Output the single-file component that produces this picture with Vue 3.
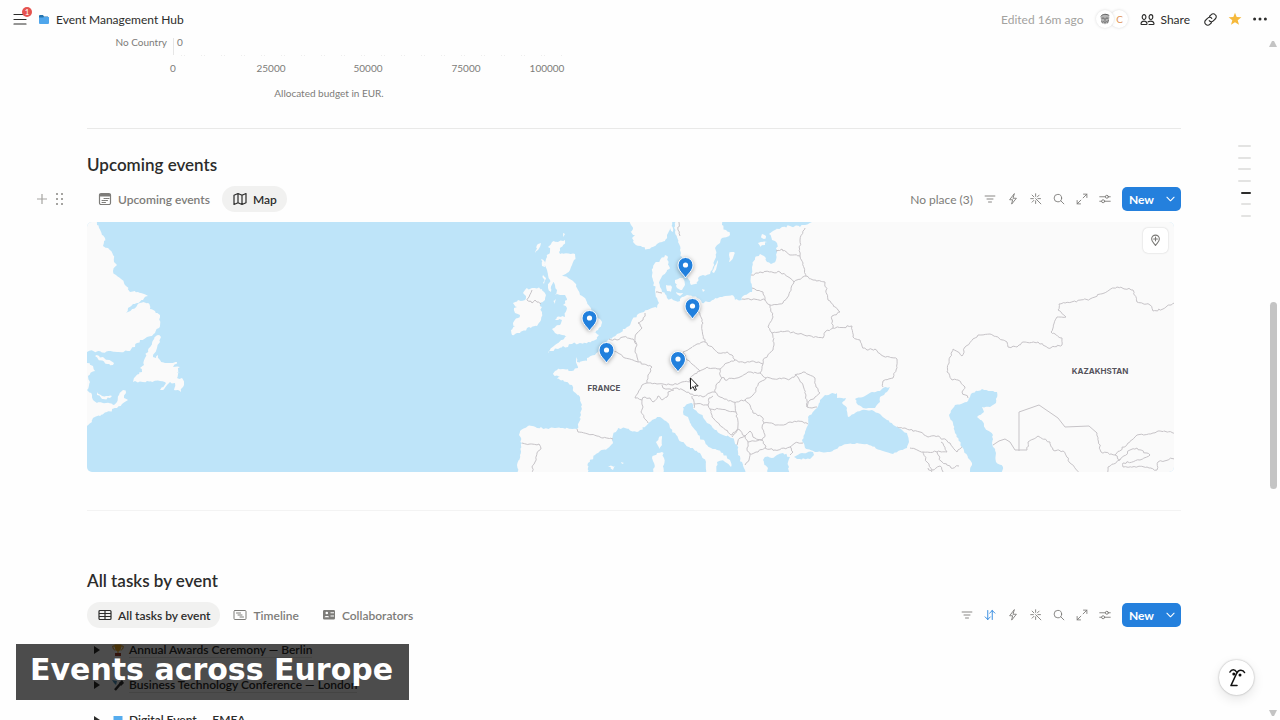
<script setup>
import { ref } from 'vue'

const ticks = [
  { x: 86, label: '0' },
  { x: 184, label: '25000' },
  { x: 281, label: '50000' },
  { x: 379, label: '75000' },
  { x: 460, label: '100000' },
]

const icons = {
  filter: 'M1.500 4h13M4 8h8M6 12h4',
  sort: 'M5 2v12M1.500 10.500 5 14l3.500-3.500M11 14V2M7.500 5.500 11 2l3.500 3.500',
  bolt: 'M9.500 1.200 3.500 9h4L6.200 14.800 12.500 7H8.500z',
  spark: 'M7.500 7.500l7 7M7.500 1v3.500M1 7.500h3.500M2.800 2.800l2.400 2.400M12.200 2.800 9.800 5.200M2.800 12.200l2.400-2.400M7.500 10.500V14M10.500 7.500H14',
  search: 'M11.500 6.800a5 5 0 1 1-10 0 5 5 0 0 1 10 0zM10.500 10.500l4 4',
  expand: 'M9.500 6.500 14.500 1.500M10 1.500h4.500V6M6.500 9.500l-5 5M1.500 10v4.500H6',
  sliders: 'M1 5h7.500M12.500 5H15M1 11h2.500M7.500 11H15M12.500 5a2 2 0 1 1-4 0 2 2 0 0 1 4 0zM7.500 11a2 2 0 1 1-4 0 2 2 0 0 1 4 0z',
}
const eventTools = ['filter', 'bolt', 'spark', 'search', 'expand', 'sliders']
const taskTools = ['filter', 'sort', 'bolt', 'spark', 'search', 'expand', 'sliders']

const outline = [0, 0, 0, 0, 2, 1, 1]
const tasks = ref([
  { icon: 'trophy', title: 'Annual Awards Ceremony — Berlin' },
  { icon: 'mic', title: 'Business Technology Conference — London' },
  { icon: 'screen', title: 'Digital Event — EMEA' },
])

const pins = [
  [685.5, 267],
  [692.5, 308],
  [589.5, 320],
  [606.5, 352],
  [678, 361],
]

// Splits each segment into short steps and nudges them, so coasts and borders look natural.
const noise = (a, b) => {
  const n = Math.sin(a * 12.9898 + b * 78.233) * 43758.5453
  return n - Math.floor(n) - 0.5
}
const roughen = (points, amount) => {
  const list = points.split(' ').map((p) => p.split(',').map(Number))
  const out = [list[0]]
  for (let i = 1; i < list.length; i++) {
    const [x0, y0] = list[i - 1]
    const [x1, y1] = list[i]
    const steps = Math.max(1, Math.round(Math.hypot(x1 - x0, y1 - y0) / 2.2))
    for (let s = 1; s < steps; s++) {
      const x = x0 + ((x1 - x0) * s) / steps
      const y = y0 + ((y1 - y0) * s) / steps
      out.push([(x + noise(x, y) * amount).toFixed(1), (y + noise(y, x) * amount).toFixed(1)])
    }
    out.push([x1, y1])
  }
  return 'M' + out.join('L')
}
const close = (points) => points + ' ' + points.split(' ')[0]

const land = [
  '80,210 94,210 97,225 99,228 102,235 105,238 103,246 108,248 113,255 114,262 117,265 113,271 116,275 120,278 125,285 130,292 138,292 148,296 143,300 135,304 128,308 126,313 133,309 140,303 148,303 150,309 155,311 160,315 159,328 155,333 147,337 140,340 135,347 130,351 117,352 80,351',
  '158,335 161,337 160,342 157,348 153,357 156,358 158,355 160,360 165,363 170,363 177,362 173,367 180,367 177,373 180,372 177,378 182,378 184,385 181,392 178,390 174,390 175,383 170,382 163,390 160,390 166,383 160,381 147,381 133,382 135,377 142,372 140,368 144,365 145,358 148,350 152,343',
  '95,356 103,357 114,363 113,365 107,364 98,359',
  '80,363 87,363 93,366 95,371 88,376 90,382 87,390 92,395 93,400 97,403 103,403 113,405 117,402 119,395 123,390 126,393 124,398 128,400 122,404 117,408 107,412 100,416 93,418 92,422 87,426 80,428',
  '96,391 102,396 112,396 110,398 103,399 97,395',
  '565,240 563,245 559,252 560,254 575,254 574,260 571,267 567,273 562,276 568,278 573,281 577,288 580,295 586,300 590,307 593,313 592,319 600,319 602,323 598,330 593,333 599,335 597,339 588,342 580,343 572,344 568,347 563,346 558,349 552,351 548,353 550,350 555,345 562,340 565,337 570,335 562,335 555,333 552,329 560,325 562,320 555,320 557,317 565,317 567,308 563,305 567,300 565,295 560,295 555,295 557,290 555,285 553,282 551,292 548,288 550,280 548,275 547,270 545,263 547,257 550,252 548,247 552,242 558,242',
  '525,290 532,288 542,289 546,295 545,300 540,304 542,312 541,320 537,326 527,328 520,333 512,335 511,330 515,326 513,323 518,318 520,315 515,313 514,308 517,307 513,303 518,300 525,300 526,296 523,293',
  '537,245 541,243 538,250 535,253', '541,259 545,262 545,267 542,266', '543,275 546,278 544,284', '553,301 556,299 555,304', '563,233 565,234 563,237',
  '628,210 671,210 673,232 670,228 667,235 665,241 657,244 648,249 642,247 633,242 632,238 635,235 630,232 633,229 631,225',
  '676,210 675,232 678,242 680,250 682,257 687,267 687,277 690,283 691,285 697,284 698,278 703,275 710,274 713,267 716,257 715,248 720,243 722,238 730,235 726,230 722,225 720,210',
  '732,252 734,252 733,258 729,262 729,255', '717,260 718,262 714,273 712,272',
  '666,285 672,287 671,292 667,291', '675,280 683,278 685,285 682,290 677,288', '676,292 683,293 680,296', '702,289 705,290 703,292',
  '758,243 767,242 765,245 760,247', '762,234 766,236 764,239 761,237',
  '662,436 662,445 659,449 656,442', '662,452 664,458 662,480 653,480 654,463 652,458 657,453', '608,467 615,466 613,470', '621,462 624,463 622,464',
  '815,205 812,222 805,225 800,227 790,226 782,227 773,231 769,234 772,240 777,243 777,250 776,260 771,264 767,262 764,256 760,254 755,258 752,267 751,275 752,287 752,292 743,296 742,300 735,300 732,295 720,297 710,302 702,303 697,298 687,295 682,297 680,301 673,300 667,298 665,294 662,292 660,287 660,280 663,275 667,270 670,268 668,265 668,257 665,255 660,260 655,263 653,268 652,277 654,283 655,290 657,298 659,303 657,308 652,308 644,312 637,315 632,320 627,327 620,333 613,337 608,340 603,345 600,350 595,355 587,358 587,361 577,362 576,357 578,368 572,371 563,369 555,371 553,374 560,377 557,379 563,380 572,385 574,392 580,397 582,405 581,415 578,425 577,429 563,428 550,428 537,428 528,426 520,431 519,435 522,443 520,455 517,465 518,480 587,480 588,463 595,455 600,451 608,448 613,442 613,435 618,428 625,428 637,432 647,425 652,420 660,417 667,422 670,428 675,433 682,442 690,448 700,453 706,462 708,480 716,480 717,462 724,461 731,467 730,460 723,453 707,445 698,435 690,423 688,417 683,412 683,407 692,403 695,410 698,413 703,417 707,423 715,430 723,435 732,438 737,445 738,455 742,462 745,470 748,480 768,480 768,468 763,460 765,457 772,458 777,455 783,453 790,457 788,462 790,480 1190,480 1190,205',
].map((points) => roughen(close(points), 2.4) + 'z').join('')

const seas = [
  '794,457 802,453 813,452 814,455 810,459 797,459',
  '825,395 837,393 837,398 846,398 842,403 847,408 848,417 855,413 862,410 872,410 878,413 887,420 897,427 907,433 909,442 907,448 893,454 880,450 867,444 857,443 843,445 830,452 817,452 805,448 802,440 808,425 808,417 817,408 820,400',
  '890,387 883,388 880,391 872,392 863,397 855,399 858,405 863,408 875,408 880,402 880,397 887,392',
  '970,397 972,393 982,389 997,392 996,403 990,407 982,407 984,412 977,417 983,422 985,428 993,435 992,443 996,453 996,462 1003,467 1000,480 967,480 972,463 968,458 962,447 955,433 953,423 949,415 955,405 967,402',
].map((points) => roughen(close(points), 1.4) + 'z').join('')

const borders = [
  '532,290 529,297 527,300 532,303 535,300 541,304', '680,215 678,230 680,236', '656,292 662,293',
  '645,313 643,320 638,323 642,328 637,333 635,338 637,345 635,352 637,357 638,362', '609,339 617,340 623,337 633,339 636,344', '606,343 613,350 618,353 625,358 633,360 638,362 652,367 648,375 647,383',
  '647,383 642,385 638,393 635,398 642,400 645,397 650,398 653,402 658,396 662,400 667,397 668,392 674,390', '647,383 657,384 663,384 673,385 682,382 690,382 690,378 700,371', '662,385 663,388 670,389 677,388 683,390 690,394 703,397 710,393 715,392',
  '700,371 692,364 687,360 683,352 688,350 697,344 705,342 713,348 718,353 727,352 732,355 735,360 745,363 752,361 763,364 760,373 766,378',
  '642,400 643,407 641,412 644,418 648,423', '577,429 578,432 588,434 597,436 603,438 613,439', '522,443 530,444 539,444 541,449 537,453 535,462 532,467 534,478',
  '697,303 700,315 703,323 702,330 705,342', '700,371 707,367 720,369 727,363 735,360', '720,369 720,375 725,380 740,377 748,372 760,373', '774,345 773,350 763,360 763,364',
  '722,378 716,385 715,392 720,397 733,402 745,400 753,395 760,382 766,378', '692,396 694,404 708,405 709,398 713,396', '694,404 694,408', '708,405 710,409',
  '766,378 790,379 797,374 803,372 815,378 816,387 820,393 815,397 810,400 807,407', '795,374 803,385 806,395 807,407 812,408 817,407',
  '745,400 750,405 753,413 762,417 764,423 762,428 765,435 762,440 755,438 750,431 745,436', '764,423 782,425 790,422 798,421 808,424', '765,448 775,450 790,447 795,443 803,443', '790,447 793,452 790,455',
  '748,442 762,440 766,447 758,452 750,454 747,448 748,442', '750,454 749,460 745,465', '737,445 740,438 745,436 748,442', '710,409 720,409 736,412 738,425 737,430 732,435 722,427 712,417 710,409', '735,402 736,412', '732,437 738,429 745,436',
  '776,251 782,249 790,255 800,256', '805,228 800,240 800,256 803,263 806,276 813,280 825,282 828,300 840,312 832,316 833,328 852,326 853,337 860,340 862,346 867,350 875,349 883,356 897,359 896,370 893,378 883,381 883,387',
  '751,275 760,272 780,272 790,278 794,282 806,276', '794,282 787,298 783,303 770,305', '752,288 763,292 765,300 770,305 773,317 768,327 772,333 774,345', '742,299 765,300', '772,333 787,331 807,336 823,338 825,332 833,328',
  '897,427 905,428 920,432 928,437 938,436 950,443 957,452 963,445', '910,448 923,452 937,452 947,452 941,442', '923,452 927,462 932,470 940,466 945,474', '937,452 941,461 951,468 959,466', '928,468 934,474',
  '968,398 962,392 965,387 958,380 952,380 947,372 950,357 953,349 962,356 965,347 978,335 990,334 1007,342 1008,347 1017,347 1023,342 1038,342 1048,348 1062,345 1062,338 1051,332 1057,317 1066,317 1058,310 1059,304 1090,299 1117,287 1133,290 1137,302 1150,305 1153,311 1163,309 1180,299',
  '1097,433 1101,452 1115,455 1137,435 1153,433 1158,431 1180,433', '1027,450 1028,442 1038,436 1050,442 1053,450 1063,451 1070,463 1082,476', '1115,455 1120,460 1108,467 1107,476', '1120,460 1130,450 1137,448 1150,455 1140,460 1123,463 1123,467 1147,467 1157,470 1158,462 1180,457',
].map((points) => roughen(points, 1.8)).join('')

const straightBorders = 'M993 445L999 441L1005 439L1010 442L1015 450L1027 450M1019 451V412L1039 405L1058 418L1065 427L1089 426L1097 433'
</script>

<template>
  <div class="app">
    <header class="topbar">
      <button class="icon-btn menu" aria-label="Open menu">
        <svg viewBox="0 0 14 12" width="14" height="12"><path d="M1 1.500h12M1 6.500h12M1 11h12" /></svg>
        <span class="badge">1</span>
      </button>
      <svg class="folder" viewBox="0 0 10 9" width="10" height="9"><path fill="#2574ae" d="M0 1a1 1 0 0 1 1-1h3l1 1.500h4v3H0z" /><path fill="#4fa6ec" d="M0 2.500h4L5 2h5v6a1 1 0 0 1-1 1H1a1 1 0 0 1-1-1z" /></svg>
      <a class="crumb" href="#">Event Management Hub</a>
      <span class="edited">Edited 16m ago</span>
      <span class="people">
        <span class="avatar face">
          <svg viewBox="0 0 14 14" width="12" height="12"><path fill="#b5b5b5" d="M2 5c0-5 10-6 10 0 0 4-2 8-5 8S2 9 2 5z" /><path d="M2 4c2-3 7-3 10-1M3 6h3M8 6h3M7 6v3M5 10c1 1 3 1 4 0M3 9l1 3M11 8l-1 4" stroke="#555" fill="none" /></svg>
        </span>
        <span class="avatar letter">C</span>
      </span>
      <button class="share">
        <svg viewBox="0 0 16 14" width="15" height="13"><path d="M6.300 4.300c0 1.500-.9 2.700-2 2.700s-2-1.200-2-2.700S3.200 1.800 4.300 1.800s2 1 2 2.500zM13.700 4.300c0 1.500-.9 2.700-2 2.700s-2-1.200-2-2.700.9-2.500 2-2.500 2 1 2 2.500zM1 11.500C1.300 9.600 2.500 8.700 4.300 8.700s2.900.9 3.200 2.800c0 .6-.3.900-.8.900H1.800c-.5 0-.8-.3-.8-.9zM8.700 9.500c.7-.5 1.600-.8 2.900-.8 1.900 0 3.100.9 3.400 2.800 0 .6-.3.900-.8.900H9.600" /></svg>
        Share
      </button>
      <button class="icon-btn link" aria-label="Copy link">
        <svg viewBox="0 0 14 14" width="13" height="13"><path d="M6 3.500l1.800-1.800a2.900 2.900 0 0 1 4.200 0l.300.300a2.900 2.900 0 0 1 0 4.200L10 8.500a2.900 2.900 0 0 1-4.400-.2M8 10.500l-1.800 1.800a2.900 2.900 0 0 1-4.200 0L1.700 12a2.900 2.900 0 0 1 0-4.200L4 5.500a2.900 2.900 0 0 1 4.400.2" /></svg>
      </button>
      <button class="icon-btn star" aria-label="Favorite">
        <svg viewBox="0 0 14 14" width="14" height="14"><path d="M7 .7l1.700 4.400 4.700.2-3.700 2.900 1.300 4.600L7 10.200l-4 2.600 1.300-4.600L.6 5.300l4.700-.2z" /></svg>
      </button>
      <button class="icon-btn more" aria-label="More">
        <svg viewBox="0 0 14 4" width="14" height="4"><circle cx="1.600" cy="2" r="1.500" /><circle cx="7" cy="2" r="1.500" /><circle cx="12.400" cy="2" r="1.500" /></svg>
      </button>
    </header>

    <main class="page">
      <svg class="chart" viewBox="0 0 500 70" width="500" height="70" role="img" aria-label="Allocated budget in EUR.">
        <path d="M86.500 0v17" stroke="#e6e6e6" />
        <path d="M94 17.500h382" stroke="#ededed" stroke-dasharray="1 2 1 16" />
        <text x="80" y="8" text-anchor="end">No Country</text>
        <text x="90" y="8">0</text>
        <text v-for="t in ticks" :key="t.label" :x="t.x" y="34" text-anchor="middle">{{ t.label }}</text>
        <text x="242" y="59" text-anchor="middle">Allocated budget in EUR.</text>
      </svg>

      <section class="events">
        <h2>Upcoming events</h2>
        <div class="bar">
          <div class="handles">
            <button class="icon-btn" aria-label="Add block"><svg viewBox="0 0 10 10" width="10" height="10"><path d="M5 0v10M0 5h10" /></svg></button>
            <button class="icon-btn" aria-label="Drag block"><svg class="grip" viewBox="0 0 8 12" width="8" height="12"><path d="M1 0h2v2H1zM6 0h2v2H6zM1 5h2v2H1zM6 5h2v2H6zM1 10h2v2H1zM6 10h2v2H6z" /></svg></button>
          </div>
          <button class="tab">
            <svg viewBox="0 0 14 14" width="14" height="14"><path d="M3 1.500h8A1.500 1.500 0 0 1 12.500 3v8a1.500 1.500 0 0 1-1.500 1.500H3A1.500 1.500 0 0 1 1.500 11V3A1.500 1.500 0 0 1 3 1.500z" /><path d="M2.500 3.200h9" stroke-width="2.400" /><path d="M6 6.500h5M4 8.500h6M4 10.500h4" stroke-width="1" stroke-dasharray="1.500 .5" /></svg>
            Upcoming events
          </button>
          <button class="tab active">
            <svg viewBox="0 0 14 14" width="14" height="14"><path d="M1 3.200 5 1.500l4 1.700 4-1.700v9.300l-4 1.700-4-1.700-4 1.700zM5 1.500v9.300M9 3.200v9.300" /></svg>
            Map
          </button>
          <div class="tools">
            <button class="no-place">No place (3)</button>
            <button v-for="name in eventTools" :key="name" class="icon-btn tool" :aria-label="name"><svg viewBox="0 0 16 16" width="12" height="12"><path :d="icons[name]" /></svg></button>
            <span class="new-group">
              <button class="new">New</button><button class="caret" aria-label="New options"><svg viewBox="0 0 10 6" width="9" height="6"><path d="M1 1l4 4 4-4" /></svg></button>
            </span>
          </div>
        </div>

        <div class="map">
          <svg class="world" viewBox="87 222 1087 250" preserveAspectRatio="xMidYMid slice">
            <path class="land" :d="land" />
            <path class="border" :d="borders" />
            <path class="sea" :d="seas" />
            <path class="border" :d="straightBorders" />
            <text x="604" y="391" text-anchor="middle">FRANCE</text>
            <text x="1100" y="374" text-anchor="middle">KAZAKHSTAN</text>
            <g v-for="pin in pins" :key="pin[0]" :transform="`translate(${pin[0]} ${pin[1]})`" class="pin">
              <path d="M0 11C-2 7-7.500 4-7.500-2a7.500 7.500 0 0 1 15 0C7.500 4 2 7 0 11z" />
              <circle cy="-2" r="2.600" />
            </g>
            <path class="cursor" d="M690.500 378v11l2.600-2.400 1.600 3.800 1.700-.7-1.600-3.700h3.400z" />
          </svg>
          <button class="locate" aria-label="Show places">
            <svg viewBox="0 0 12 14" width="11" height="13"><path d="M6 12.500C5 10.500 1.800 8.500 1.800 5.300a4.200 4.200 0 0 1 8.400 0C10.200 8.500 7 10.500 6 12.500zM6 3.200v4.200M3.900 5.300h4.200" /></svg>
          </button>
        </div>
      </section>

      <section class="tasks">
        <h2>All tasks by event</h2>
        <div class="bar">
          <button class="tab active">
            <svg viewBox="0 0 14 14" width="14" height="14"><path d="M2 2.500h10a1 1 0 0 1 1 1v7a1 1 0 0 1-1 1H2a1 1 0 0 1-1-1v-7a1 1 0 0 1 1-1zM1 5.500h12M1 8.500h12M7 2.500v9" /></svg>
            All tasks by event
          </button>
          <button class="tab">
            <svg viewBox="0 0 14 14" width="14" height="14"><path d="M2 2.500h10a1 1 0 0 1 1 1v7a1 1 0 0 1-1 1H2a1 1 0 0 1-1-1v-7a1 1 0 0 1 1-1zM3.500 5h4M5 7h4M7 9h3.500" stroke-width="1" /></svg>
            Timeline
          </button>
          <button class="tab">
            <svg class="solid" viewBox="0 0 14 14" width="14" height="14"><path fill-rule="evenodd" d="M2.200 2h9.600A1.200 1.200 0 0 1 13 3.200v7.100a1.200 1.200 0 0 1-1.200 1.200H2.200A1.200 1.200 0 0 1 1 10.300V3.200A1.200 1.200 0 0 1 2.200 2zM3.500 5a1.300 1.300 0 1 0 2.600 0 1.300 1.300 0 0 0-2.600 0zM2.500 9.300h4.600C7 7.500 2.700 7.500 2.500 9.300zM8.500 4.300v1H12v-1zM8.500 7.500v1H12v-1z" /></svg>
            Collaborators
          </button>
          <div class="tools">
            <button v-for="name in taskTools" :key="name" class="icon-btn tool" :class="{ on: name === 'sort' }" :aria-label="name"><svg viewBox="0 0 16 16" width="12" height="12"><path :d="icons[name]" /></svg></button>
            <span class="new-group">
              <button class="new">New</button><button class="caret" aria-label="New options"><svg viewBox="0 0 10 6" width="9" height="6"><path d="M1 1l4 4 4-4" /></svg></button>
            </span>
          </div>
        </div>
        <ul class="rows">
          <li v-for="task in tasks" :key="task.title">
            <button class="icon-btn" :aria-label="'Expand ' + task.title"><svg class="solid" viewBox="0 0 6 8" width="6" height="8"><path d="M0 0l6 4-6 4z" /></svg></button>
            <svg v-if="task.icon === 'trophy'" class="emoji" viewBox="0 0 12 12" width="12" height="12"><path fill="none" stroke="#d9921c" d="M3 2H.8c0 3 1 4 2.700 4M9 2h2.200c0 3-1 4-2.700 4" /><path fill="#f0a91f" d="M2.500.5h7C9.500 5 8 7 6.600 7.300v2H5.400v-2C4 7 2.500 5 2.500.5z" /><path fill="#a8442c" d="M3 9h6v3H3z" /></svg>
            <svg v-else-if="task.icon === 'mic'" class="emoji" viewBox="0 0 12 12" width="12" height="12"><path stroke="#333" stroke-width="2.500" d="M3 11l6-7" /><path fill="#333" d="M7 4l3-3 2 3-3 3z" /><path fill="#4d94bd" d="M0 1l5 1-1 4-2-2z" /></svg>
            <svg v-else class="emoji" viewBox="0 0 12 12" width="12" height="12"><path fill="#55acee" d="M1.500 2h9v8h-9z" /></svg>
            <a href="#">{{ task.title }}</a>
          </li>
        </ul>
      </section>
    </main>

    <nav class="outline" aria-label="Page outline">
      <a v-for="(level, i) in outline" :key="i" href="#" :class="'level-' + level" :aria-label="'Section ' + (i + 1)"></a>
    </nav>
    <div class="scroll">
      <svg viewBox="0 0 8 6" width="8" height="6"><path d="M3 0h2l3 6H0z" /></svg>
      <span class="thumb"></span>
      <svg viewBox="0 0 8 6" width="8" height="6"><path d="M0 0h8L5 6H3z" /></svg>
    </div>
    <button class="assistant" aria-label="Assistant">
      <svg viewBox="0 0 18 20" width="18" height="20"><path d="M2 4c1.500-3 5-3 6.500 0M9 5c1.500-3.500 6-3.500 7.500-.5M9 4.500 3 17.500h6" /><circle cx="5.800" cy="6" r="1.500" /><circle cx="12" cy="7" r="1.500" /></svg>
    </button>
    <div class="caption">Events across Europe</div>
  </div>
</template>

<style>
body {
  background: #fefefe;
  overflow: hidden;
}
</style>

<style scoped>
.app {
  position: relative;
  height: 100vh;
  overflow: hidden;
  display: flex;
  flex-direction: column;
  font-family: Lato, "Open Sans", sans-serif;
  font-size: 12px;
  color: #2c2c2b;
}
button {
  font: inherit;
  color: inherit;
  background: none;
  border: 0;
  padding: 0;
  display: flex;
  align-items: center;
}
a {
  color: inherit;
  text-decoration: none;
}
svg {
  display: block;
  flex: none;
}
button svg {
  fill: none;
  stroke: currentColor;
  stroke-width: 1.200;
  stroke-linejoin: round;
  stroke-linecap: round;
}
button svg.solid,
button svg.grip {
  fill: currentColor;
  stroke: none;
}
.icon-btn {
  justify-content: center;
}

.topbar {
  height: 38px;
  flex: none;
  display: flex;
  align-items: center;
  padding: 0 13px;
}
.menu {
  position: relative;
}
.badge {
  position: absolute;
  left: 9px;
  top: -6px;
  width: 10px;
  height: 10px;
  border-radius: 5px;
  background: #e5534f;
  color: #fff;
  font-size: 8px;
  line-height: 10px;
  text-align: center;
}
.folder {
  margin: 0 7px 0 12px;
}
.edited {
  margin-left: auto;
  color: #a3a29f;
}
.people {
  display: flex;
  margin: 0 12px 0 13px;
}
.avatar {
  width: 18px;
  height: 18px;
  border-radius: 50%;
  background: #fff;
  box-shadow: 0 0 3px #00000026;
  display: grid;
  place-items: center;
}
.face {
  z-index: 1;
}
.letter {
  margin-left: -4px;
  color: #e0955a;
  font-size: 10px;
}
.share {
  gap: 5px;
}
.link {
  margin-left: 14px;
}
.star {
  margin: 0 11px 0 11px;
}
.topbar .star svg {
  fill: #f6b93b;
  stroke: none;
}
.topbar .more svg {
  fill: currentColor;
  stroke: none;
}

.page {
  flex: 1;
  min-height: 0;
  padding: 0 99px 0 87px;
}
.chart {
  font-size: 10px;
  overflow: visible;
}
.chart text {
  fill: #7d7c79;
}
.events {
  border-top: 1px solid #e9e9e8;
  border-bottom: 1px solid #f3f3f3;
  margin-top: 20px;
  padding: 24px 0 38px;
}
.tasks {
  padding-top: 58px;
}
h2 {
  margin: 0 0 9px;
  font-size: 17px;
  line-height: 24px;
  font-weight: 600;
}
.bar {
  position: relative;
  display: flex;
  align-items: center;
  gap: 2px;
  height: 26px;
}
.handles {
  position: absolute;
  left: -50px;
  display: flex;
  gap: 8px;
  color: #a5a4a1;
}
.tab {
  height: 26px;
  gap: 6px;
  padding: 0 10px 0 11px;
  border-radius: 13px;
  color: #7d7c79;
  font-weight: 600;
}
.tab.active {
  background: #f1f1f0;
  color: #2c2c2b;
}
.tools {
  margin-left: auto;
  display: flex;
  align-items: center;
  color: #7d7c79;
}
.no-place {
  margin-right: 11px;
}
.tool {
  margin-right: 11px;
}
.tool.on {
  color: #2783de;
}
.new-group {
  display: flex;
  height: 24px;
  border-radius: 5px;
  background: #2480dd;
  color: #fff;
  font-weight: 700;
}
.new {
  padding: 0 7px;
}
.caret {
  padding: 0 6px 0 5px;
}

.map {
  position: relative;
  height: 250px;
  margin: 10px 7px 0 0;
}
.world {
  width: 100%;
  height: 250px;
  background: #bee4f9;
  border-radius: 5px;
}
.land {
  fill: #fafafa;
}
.sea {
  fill: #bee4f9;
}
.border {
  fill: none;
  stroke: #c6c3c7;
  stroke-width: 1;
}
.world text {
  font-family: Inter, sans-serif;
  font-size: 8px;
  font-weight: 700;
  fill: #55535c;
  stroke: #fff;
  stroke-width: 1;
  paint-order: stroke;
}
.pin {
  filter: drop-shadow(0 1px 2px #00000055);
}
.pin path {
  fill: #2180dd;
  stroke: #fff;
  stroke-width: 1;
}
.pin circle {
  fill: #fff;
}
.cursor {
  fill: #fff;
  stroke: #222;
  stroke-width: 1;
}
.locate {
  position: absolute;
  top: 6px;
  right: 6px;
  width: 25px;
  height: 25px;
  justify-content: center;
  border-radius: 5px;
  background: #fff;
  color: #7a7976;
  box-shadow: 0 0 2px #00000033;
}

.rows {
  list-style: none;
  margin: 4px 0 0;
  padding: 0 0 0 7px;
}
.rows li {
  display: flex;
  align-items: center;
  height: 35px;
  font-weight: 600;
}
.emoji {
  margin: 0 5px 0 12px;
}
.rows a {
  border-bottom: 1px solid #e3e3e2;
}

.outline {
  position: absolute;
  right: 29px;
  top: 145px;
  height: 72px;
  display: flex;
  flex-direction: column;
  align-items: flex-end;
  justify-content: space-between;
}
.outline a {
  width: 13px;
  height: 2px;
  border-radius: 1px;
  background: #e3e3e2;
}
.outline .level-1 {
  width: 10px;
}
.outline .level-2 {
  width: 10px;
  background: #2c2c2b;
}
.scroll {
  position: absolute;
  top: 41px;
  bottom: 4px;
  right: 3px;
  display: flex;
  flex-direction: column;
  align-items: center;
  justify-content: space-between;
  fill: #c4c4c4;
}
.thumb {
  width: 7px;
  height: 187px;
  margin-top: 33px;
  border-radius: 4px;
  background: #c4c4c4;
}
.assistant {
  position: absolute;
  right: 26px;
  bottom: 25px;
  width: 35px;
  height: 35px;
  justify-content: center;
  border-radius: 50%;
  background: #fff;
  box-shadow: 0 0 2px #00000055, 0 4px 12px #0000001a;
  color: #111;
}
.assistant svg {
  stroke-width: 1.600;
}
.assistant circle {
  fill: #111;
  stroke: none;
}
.caption {
  position: absolute;
  left: 16px;
  bottom: 20px;
  padding: 0 16px 4px 14px;
  background: #000000b3;
  color: #fff;
  font: 700 30px/52px "DejaVu Sans", sans-serif;
}
</style>
